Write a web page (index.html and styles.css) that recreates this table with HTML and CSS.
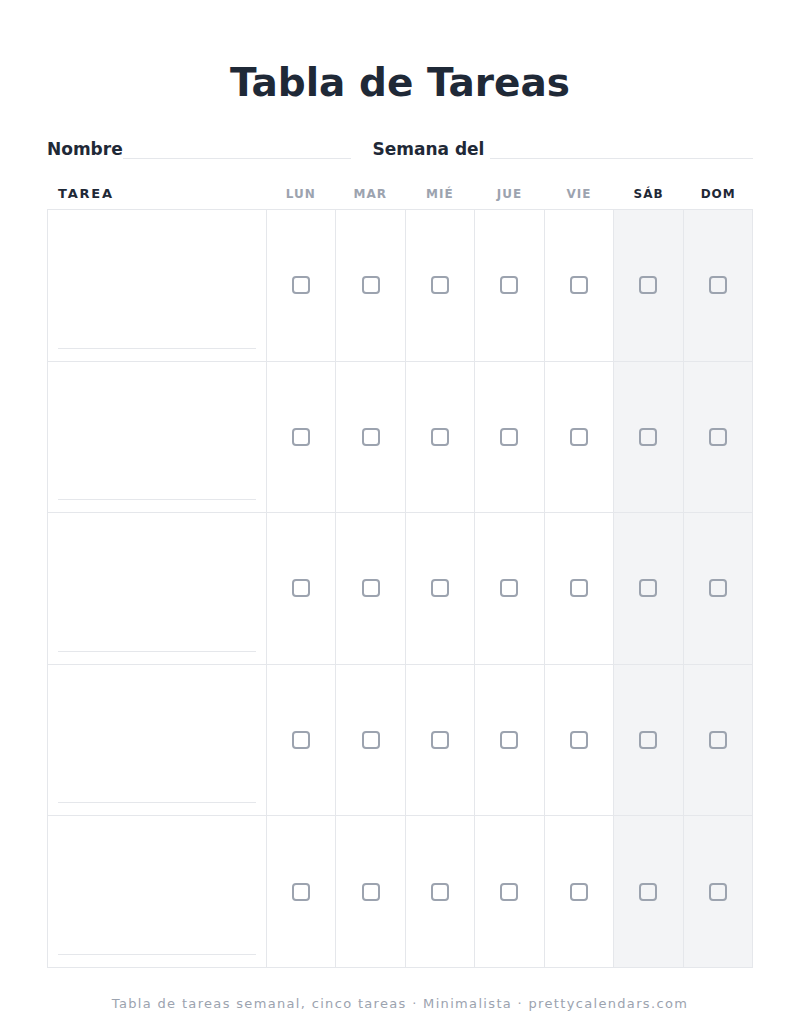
FILE: index.html
```html
<!DOCTYPE html>
<html lang="es">
<head>
    <meta charset="UTF-8">
    <meta name="viewport" content="width=device-width, initial-scale=1.0">
    <title>Tabla de Tareas</title>
    <link rel="stylesheet" href="styles.css">
</head>
<body>
    <div class="page">
        <h1 class="title">Tabla de Tareas</h1>

        <div class="fields">
            <div class="field field-name">
                <span class="field-label">Nombre</span>
                <span class="field-line"></span>
            </div>
            <div class="field field-week">
                <span class="field-label">Semana del</span>
                <span class="field-line"></span>
            </div>
        </div>

        <div class="head-row">
            <div class="head-task">TAREA</div>
            <div class="head-day">LUN</div>
            <div class="head-day">MAR</div>
            <div class="head-day">MIÉ</div>
            <div class="head-day">JUE</div>
            <div class="head-day">VIE</div>
            <div class="head-day weekend">SÁB</div>
            <div class="head-day weekend">DOM</div>
        </div>

        <div class="table">
            <div class="row">
                <div class="task"><span class="task-line"></span></div>
                <div class="day"><span class="box"></span></div>
                <div class="day"><span class="box"></span></div>
                <div class="day"><span class="box"></span></div>
                <div class="day"><span class="box"></span></div>
                <div class="day"><span class="box"></span></div>
                <div class="day weekend"><span class="box"></span></div>
                <div class="day weekend"><span class="box"></span></div>
            </div>
            <div class="row">
                <div class="task"><span class="task-line"></span></div>
                <div class="day"><span class="box"></span></div>
                <div class="day"><span class="box"></span></div>
                <div class="day"><span class="box"></span></div>
                <div class="day"><span class="box"></span></div>
                <div class="day"><span class="box"></span></div>
                <div class="day weekend"><span class="box"></span></div>
                <div class="day weekend"><span class="box"></span></div>
            </div>
            <div class="row">
                <div class="task"><span class="task-line"></span></div>
                <div class="day"><span class="box"></span></div>
                <div class="day"><span class="box"></span></div>
                <div class="day"><span class="box"></span></div>
                <div class="day"><span class="box"></span></div>
                <div class="day"><span class="box"></span></div>
                <div class="day weekend"><span class="box"></span></div>
                <div class="day weekend"><span class="box"></span></div>
            </div>
            <div class="row">
                <div class="task"><span class="task-line"></span></div>
                <div class="day"><span class="box"></span></div>
                <div class="day"><span class="box"></span></div>
                <div class="day"><span class="box"></span></div>
                <div class="day"><span class="box"></span></div>
                <div class="day"><span class="box"></span></div>
                <div class="day weekend"><span class="box"></span></div>
                <div class="day weekend"><span class="box"></span></div>
            </div>
            <div class="row">
                <div class="task"><span class="task-line"></span></div>
                <div class="day"><span class="box"></span></div>
                <div class="day"><span class="box"></span></div>
                <div class="day"><span class="box"></span></div>
                <div class="day"><span class="box"></span></div>
                <div class="day"><span class="box"></span></div>
                <div class="day weekend"><span class="box"></span></div>
                <div class="day weekend"><span class="box"></span></div>
            </div>
        </div>

        <footer class="footer">Tabla de tareas semanal, cinco tareas · Minimalista · prettycalendars.com</footer>
    </div>
</body>
</html>
```

FILE: styles.css
```css
* {
    margin: 0;
    padding: 0;
    box-sizing: border-box;
}

body {
    font-family: 'DejaVu Sans', 'Noto Sans', sans-serif;
    background: #ffffff;
    color: #1f2937;
}

.page {
    width: 800px;
    height: 1036px;
    padding: 60px 47px 0;
}

/* 标题 */
.title {
    font-size: 39px;
    line-height: 46px;
    font-weight: bold;
    text-align: center;
    color: #1f2937;
}

/* 姓名 / 周 */
.fields {
    display: flex;
    gap: 21px;
    margin-top: 33px;
}

.field {
    display: flex;
    align-items: flex-end;
}

.field-name {
    flex: 4;
}

.field-week {
    flex: 5;
    gap: 6px;
}

.field-label {
    font-size: 17px;
    line-height: 20px;
    font-weight: bold;
    white-space: nowrap;
}

.field-line {
    flex: 1;
    height: 16px;
    border-bottom: 1px solid #e5e7eb;
    margin-bottom: 0;
}

/* 表头 */
.head-row {
    display: grid;
    grid-template-columns: 219px repeat(7, 1fr);
    align-items: baseline;
    margin-top: 27px;
    padding-bottom: 7px;
}

.head-task {
    font-size: 13px;
    line-height: 16px;
    font-weight: bold;
    letter-spacing: 1.8px;
    padding-left: 11px;
}

.head-day {
    font-size: 12px;
    line-height: 16px;
    font-weight: bold;
    letter-spacing: 1px;
    text-align: center;
    color: #9ca3af;
}

.head-day.weekend {
    color: #1f2937;
}

/* 表格 */
.table {
    border: 1px solid #e5e7eb;
}

.row {
    display: grid;
    grid-template-columns: 218px repeat(7, 1fr);
    height: 151.6px;
    border-bottom: 1px solid #e5e7eb;
}

.row:last-child {
    height: 150.6px;
    border-bottom: none;
}

.task {
    display: flex;
    align-items: flex-end;
    padding: 0 10px 12px;
}

.task-line {
    flex: 1;
    border-bottom: 1px solid #e5e7eb;
}

.day {
    display: flex;
    align-items: center;
    justify-content: center;
    border-left: 1px solid #e5e7eb;
}

.day.weekend {
    background: #f3f4f6;
}

.box {
    width: 18px;
    height: 18px;
    border: 2px solid #9ca3af;
    border-radius: 4px;
}

/* 页脚 */
.footer {
    margin-top: 28px;
    font-size: 13px;
    line-height: 16px;
    letter-spacing: 1.33px;
    text-align: center;
    color: #9ca3af;
}
```
